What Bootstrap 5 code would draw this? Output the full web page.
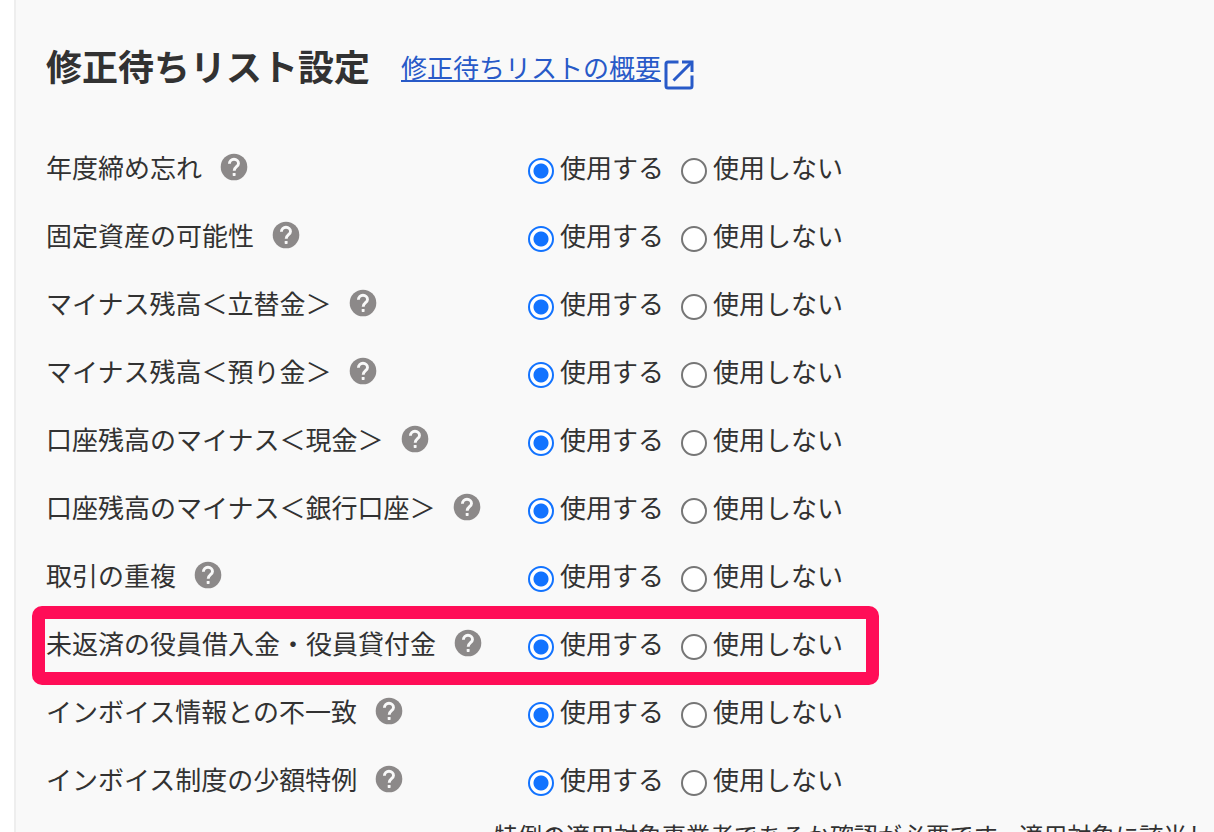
<!DOCTYPE html>
<html lang="ja">
<head>
<meta charset="utf-8">
<meta name="viewport" content="width=device-width, initial-scale=1">
<title>修正待ちリスト設定</title>
<link href="https://cdn.jsdelivr.net/npm/bootstrap@5.3.0/dist/css/bootstrap.min.css" rel="stylesheet">
<style>
  body { font-family: "Noto Sans CJK JP", sans-serif; font-size: 26px; line-height: 36px; color: #323232; }
  .settings-panel { margin-left: 14px; border-left: 2px solid #eee; background: #f9f9f9; padding: 39px 0 0 30px; }
  .page-title { font-size: 36px; font-weight: 700; line-height: 52px; padding-bottom: 4px; }
  .page-head { gap: 31px; margin-bottom: 38px; }
  .help-link { color: #285ac8; text-decoration-thickness: 2px; text-underline-offset: 2px; }
  .help-link:hover { color: #1e46a0; }
  .open-icon { width: 30px; height: 30px; margin: 16px 0 0 3px; color: #285ac8; }
  .setting-row { height: 68px; width: fit-content; white-space: nowrap; }
  .setting-name { width: 482px; gap: 18px; }
  .help-btn { width: 28px; height: 28px; color: #8c8989; }
  .choices { gap: 17px; }
  .choice { gap: 6px; }
  .choice input { appearance: none; width: 26px; height: 26px; margin: 7px 0 0; border: 2px solid #767676; border-radius: 50%; background: #fff; }
  .choice input:checked { border-color: #1273ff; background: radial-gradient(circle, #1273ff 7px, #fff 8px); }
  .highlight-frame { inset: -3px -36px -8px -14px; border: 13px solid #ff0d57; border-radius: 10px; pointer-events: none; }
  .setting-note { margin-left: 448px; padding-top: 4px; font-size: 24px; line-height: 36px; white-space: nowrap; }
</style>
</head>
<body>
<svg class="d-none" xmlns="http://www.w3.org/2000/svg">
  <symbol id="help" viewBox="0 0 28 28"><circle cx="14" cy="14" r="13.300" fill="currentColor"/><path d="M9.400 10.800C9.400 7.900 11.500 6.300 14 6.300s4.500 1.700 4.500 4.200c0 3.100-4.300 3.400-4.300 7.200" fill="none" stroke="#f9f9f9" stroke-width="2.900"/><rect x="12.700" y="20" width="2.900" height="2.900" rx=".6" fill="#f9f9f9"/></symbol>
</svg>
<main class="settings-panel vh-100 overflow-hidden">
  <header class="page-head d-flex align-items-center">
    <h1 class="page-title mb-0">修正待ちリスト設定</h1>
    <div class="d-flex align-items-center">
      <a class="help-link" href="#overview">修正待ちリストの概要</a>
      <svg class="open-icon" viewBox="0 0 30 30" fill="none" stroke="currentColor" stroke-width="3" aria-hidden="true"><path d="M14.500 2H4a2 2 0 0 0-2 2v22a2 2 0 0 0 2 2h22a2 2 0 0 0 2-2V15.500M9.500 20.500 27 3"/><path d="M18 2h10v10"/></svg>
    </div>
  </header>
  <form id="settings"></form>
  <p class="setting-note mb-0">特例の適用対象事業者であるか確認が必要です。適用対象に該当し</p>
</main>
<script>
  const items = ["年度締め忘れ", "固定資産の可能性", "マイナス残高＜立替金＞", "マイナス残高＜預り金＞", "口座残高のマイナス＜現金＞", "口座残高のマイナス＜銀行口座＞", "取引の重複", "未返済の役員借入金・役員貸付金", "インボイス情報との不一致", "インボイス制度の少額特例"];
  const highlighted = 7;
  document.getElementById("settings").innerHTML = items.map((name, i) => `
    <div class="setting-row position-relative d-flex align-items-center" role="radiogroup" aria-labelledby="name${i}">
      <div class="setting-name d-flex align-items-center">
        <span id="name${i}">${name}</span>
        <button type="button" class="help-btn btn p-0 border-0 d-flex" aria-label="ヘルプ"><svg width="28" height="28"><use href="#help"/></svg></button>
      </div>
      <div class="choices d-flex">
        <label class="choice d-flex align-items-center" for="on${i}"><input type="radio" id="on${i}" name="item${i}" checked>使用する</label>
        <label class="choice d-flex align-items-center" for="off${i}"><input type="radio" id="off${i}" name="item${i}">使用しない</label>
      </div>
      ${i === highlighted ? '<div class="highlight-frame position-absolute"></div>' : ''}
    </div>`).join("");
</script>
<script src="https://cdn.jsdelivr.net/npm/bootstrap@5.3.0/dist/js/bootstrap.bundle.min.js"></script>
</body>
</html>
